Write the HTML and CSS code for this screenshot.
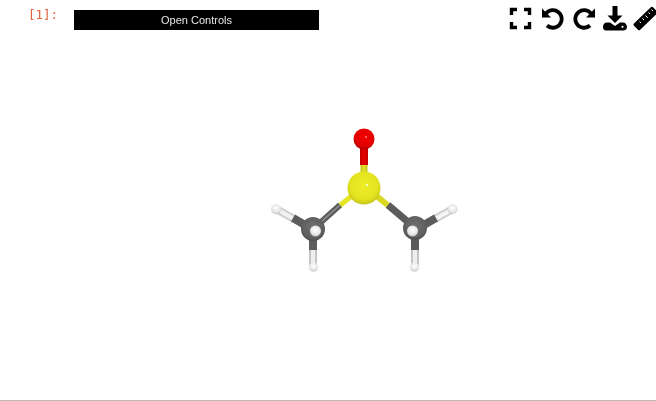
FILE: index.html
```html
<!DOCTYPE html>
<html lang="en">
<head>
<meta charset="utf-8">
<title>Molecule viewer</title>
<link rel="stylesheet" href="styles.css">
</head>
<body>
<div class="cell">
  <svg class="viewer" viewBox="0 0 656 400">
    <defs>
      <radialGradient id="gs" cx=".5" cy=".42" r=".62"><stop offset="0" stop-color="#eeee26"/><stop offset=".7" stop-color="#e2e220"/><stop offset="1" stop-color="#bcbc14"/></radialGradient>
      <radialGradient id="go" cx=".55" cy=".4" r=".62"><stop offset="0" stop-color="#f40000"/><stop offset=".75" stop-color="#e00000"/><stop offset="1" stop-color="#a80000"/></radialGradient>
      <radialGradient id="gc" cx=".5" cy=".42" r=".62"><stop offset="0" stop-color="#707070"/><stop offset=".7" stop-color="#606060"/><stop offset="1" stop-color="#484848"/></radialGradient>
      <radialGradient id="gh" cx=".5" cy=".4" r=".65"><stop offset="0" stop-color="#fff"/><stop offset=".7" stop-color="#e4e4e4"/><stop offset="1" stop-color="#a8a8a8"/></radialGradient>
    </defs>
    <g fill="none">
      <path d="M364 145V165" stroke="#c80000" stroke-width="8"/>
      <path d="M364 145V165" stroke="#e00000" stroke-width="4"/>
      <path d="M364 165V178" stroke="#c8c818" stroke-width="7"/>
      <path d="M364 165V178" stroke="#e0e028" stroke-width="3"/>
      <path d="M354 194 338 207" stroke="#e4e420" stroke-width="5"/>
      <path d="M340 205 320 223" stroke="#5c5c5c" stroke-width="6"/>
      <path d="M340 205 322 221" stroke="#999" stroke-width="1.200"/>
      <path d="M374 194 390 207" stroke="#d8d820" stroke-width="6"/>
      <path d="M388 205 408 222" stroke="#5c5c5c" stroke-width="7"/>
      <path d="M278 210 294 219" stroke="#cfcfcf" stroke-width="8"/>
      <path d="M278 210 294 219" stroke="#f2f2f2" stroke-width="4"/>
      <path d="M293 218 305 225" stroke="#5c5c5c" stroke-width="8"/>
      <path d="M313 267V250" stroke="#c4c4c4" stroke-width="8"/>
      <path d="M313 267V250" stroke="#eee" stroke-width="4"/>
      <path d="M313 250V236" stroke="#5c5c5c" stroke-width="8"/>
      <path d="M451 210 435 219" stroke="#cfcfcf" stroke-width="8"/>
      <path d="M451 210 435 219" stroke="#f6f6f6" stroke-width="4"/>
      <path d="M436 218 422 226" stroke="#5c5c5c" stroke-width="8"/>
      <path d="M415 267V250" stroke="#c4c4c4" stroke-width="8"/>
      <path d="M415 267V250" stroke="#eee" stroke-width="4"/>
      <path d="M415 250V236" stroke="#5c5c5c" stroke-width="8"/>
    </g>
    <circle cx="364" cy="139" r="10.500" fill="url(#go)"/>
    <circle cx="366" cy="137" r="1" fill="#f88"/>
    <circle cx="364" cy="188" r="16.500" fill="url(#gs)"/>
    <circle cx="367" cy="185" r="1" fill="#fff"/>
    <circle cx="313" cy="229" r="12" fill="url(#gc)"/>
    <circle cx="415" cy="228" r="12" fill="url(#gc)"/>
    <circle cx="315.500" cy="231" r="5.500" fill="url(#gh)"/>
    <circle cx="412.500" cy="231" r="5.500" fill="url(#gh)"/>
    <circle cx="276" cy="209" r="5" fill="url(#gh)"/>
    <circle cx="313.500" cy="267" r="4.500" fill="url(#gh)"/>
    <circle cx="452.500" cy="209" r="5" fill="url(#gh)"/>
    <circle cx="414.500" cy="267" r="4.500" fill="url(#gh)"/>
  </svg>
  <div class="toolbar">
    <div class="prompt">[1]:</div>
    <button class="controls">Open Controls</button>
    <div class="icons">
      <svg class="icon" viewBox="0 0 24 24"><path d="M2.500 9V3.500H8M15 3.500h5.500V9M20.500 16v5.500H15M8 21.500H2.500V16" fill="none" stroke="#000" stroke-width="3.400"/></svg>
      <svg class="icon" viewBox="0 0 24 24"><path d="M2 2.500V11.500h9z" fill="#000"/><path d="M6 7.500A8.800 8.800 0 1 1 7 19.500" fill="none" stroke="#000" stroke-width="3.800"/></svg>
      <svg class="icon" viewBox="0 0 24 24"><path d="M24 2.500V11.500h-9z" fill="#000"/><path d="M20 7.500A8.800 8.800 0 1 0 19 19.500" fill="none" stroke="#000" stroke-width="3.800"/></svg>
      <svg class="icon" viewBox="0 0 24 24"><path d="M10.500 0h5v9.500h5l-7.500 7.500-7.500-7.500h5z" fill="#000"/><path d="M1 21c0-2.500 1.500-4.500 4-4.500h3l5 3.500 5-3.500h3c2 0 4 2 4 4.500S23 24.500 21 24.500H4C2 24.500 1 23 1 21z" fill="#000"/><circle cx="20.500" cy="20.800" r="1.100" fill="#fff"/></svg>
      <svg class="icon" viewBox="0 0 24 24"><path d="M1 17.500c-.7.7-.7 1.500 0 2.200l4 4c.7.700 1.500.700 2.200 0L24 7.500c.7-.7.700-1.500 0-2.200l-4-4c-.7-.7-1.500-.7-2.200 0z" fill="#000"/><path d="M18.500 3.500l1.500 1.500M15.500 6.500l1.500 1.500M12.500 9.500l2.200 2.200M9.500 12.500l1.500 1.500M6.500 15.500l1.500 1.500" stroke="#fff" stroke-width="1"/></svg>
    </div>
  </div>
</div>
</body>
</html>
```
FILE: styles.css
```css
html, body {
  margin: 0;
  padding: 0;
  background: #fff;
}
.cell {
  position: relative;
  width: 656px;
  height: 401px;
  box-sizing: border-box;
  border-bottom: 1px solid #b8b8b8;
  overflow: hidden;
}
.viewer {
  position: absolute;
  top: 0;
  left: 0;
  width: 656px;
  height: 400px;
}
.toolbar {
  position: relative;
  display: flex;
  align-items: flex-start;
  height: 31px;
}
.prompt {
  width: 58px;
  margin-right: 16px;
  padding-top: 8px;
  text-align: right;
  font: 12.5px/14px "DejaVu Sans Mono", monospace;
  color: #e2603a;
  box-sizing: border-box;
  will-change: transform;
}
.controls {
  width: 245px;
  height: 20px;
  margin-top: 10px;
  padding: 0;
  border: 0;
  background: #000;
  color: #e8e8e8;
  font: 11px/20px "Liberation Sans", sans-serif;
  will-change: transform;
}
.icons {
  display: flex;
  gap: 7px;
  margin-left: auto;
  margin-right: -1px;
  padding-top: 6px;
}
.icon {
  width: 24px;
  height: 24px;
  display: block;
  overflow: visible;
}
```
